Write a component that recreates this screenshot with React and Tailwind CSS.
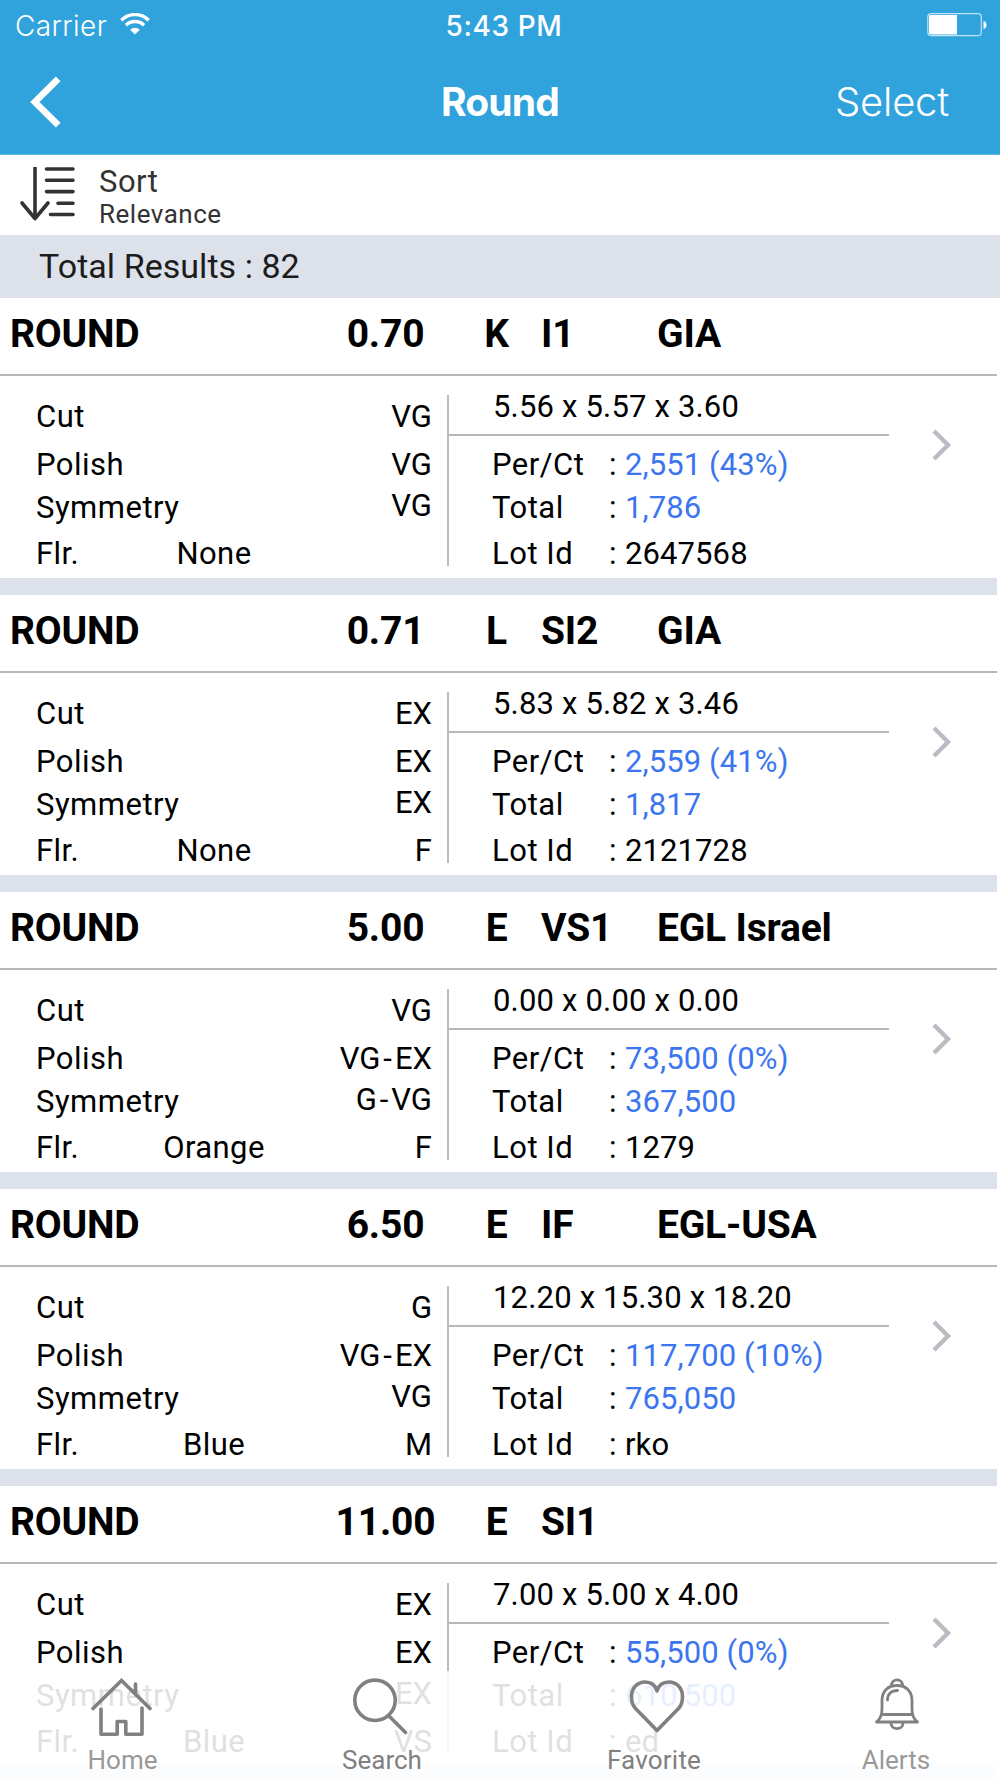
const stones = [
  {
    carat: '0.70', color: 'K', clarity: 'I1', lab: 'GIA',
    cut: 'VG', polish: 'VG', symmetry: 'VG', flr: 'None', flrGrade: '',
    size: '5.56 x 5.57 x 3.60', perCt: '2,551 (43%)', total: '1,786', lotId: '2647568',
  },
  {
    carat: '0.71', color: 'L', clarity: 'SI2', lab: 'GIA',
    cut: 'EX', polish: 'EX', symmetry: 'EX', flr: 'None', flrGrade: 'F',
    size: '5.83 x 5.82 x 3.46', perCt: '2,559 (41%)', total: '1,817', lotId: '2121728',
  },
  {
    carat: '5.00', color: 'E', clarity: 'VS1', lab: 'EGL Israel',
    cut: 'VG', polish: 'VG-EX', symmetry: 'G-VG', flr: 'Orange', flrGrade: 'F',
    size: '0.00 x 0.00 x 0.00', perCt: '73,500 (0%)', total: '367,500', lotId: '1279',
  },
  {
    carat: '6.50', color: 'E', clarity: 'IF', lab: 'EGL-USA',
    cut: 'G', polish: 'VG-EX', symmetry: 'VG', flr: 'Blue', flrGrade: 'M',
    size: '12.20 x 15.30 x 18.20', perCt: '117,700 (10%)', total: '765,050', lotId: 'rko',
  },
  {
    carat: '11.00', color: 'E', clarity: 'SI1', lab: '',
    cut: 'EX', polish: 'EX', symmetry: 'EX', flr: 'Blue', flrGrade: 'VS',
    size: '7.00 x 5.00 x 4.00', perCt: '55,500 (0%)', total: '610,500', lotId: 'ed',
  },
]

function StatusBar() {
  return (
    <div className="flex h-[50px] items-center pl-[15px] pr-[13px] text-[28px] leading-none">
      <div className="flex flex-1 items-center">
        <span className="mt-[2px] font-[350] tracking-[0.4px]">Carrier</span>
        <svg className="ml-[13px] mt-[-2px]" width="30" height="22" viewBox="0 0 30 22" fill="none" stroke="currentColor">
          <path d="M1.3 7.2a19.5 19.5 0 0 1 27.4 0" strokeWidth="3.4" />
          <path d="M6 12.2a12.8 12.8 0 0 1 18 0" strokeWidth="3.4" />
          <path d="M15 21.5l-4.8-4.8a6.8 6.8 0 0 1 9.6 0z" fill="currentColor" stroke="none" />
        </svg>
      </div>
      <span className="ml-[6px] mt-[2px] font-medium tracking-[0.6px]">5:43 PM</span>
      <div className="flex flex-1 justify-end">
        <svg width="60" height="24" viewBox="0 0 60 24" fill="none">
          <rect x="0.8" y="0.7" width="53.5" height="22" rx="3.5" stroke="#fff" strokeOpacity="0.7" strokeWidth="1.2" />
          <path d="M4 2h26v19.5H4a2 2 0 0 1-2-2V4a2 2 0 0 1 2-2z" fill="#fff" />
          <path d="M56.5 8c4 1 4 7 0 8z" fill="#fff" />
        </svg>
      </div>
    </div>
  )
}

function NavBar() {
  return (
    <div className="flex h-[104px] items-center pl-[30px] pr-[51px] pb-px">
      <div className="flex-1">
        <svg width="31" height="52" viewBox="0 0 31 52" fill="none" stroke="currentColor" strokeWidth="6.6">
          <path d="M28.2 2.8L4.9 26l23.3 23.2" />
        </svg>
      </div>
      <h1 className="mr-[-21px] text-[39px] font-bold leading-none tracking-[-0.8px]">Round</h1>
      <div className="flex flex-1 justify-end">
        <button className="text-[40px] font-[350] leading-none tracking-[-0.2px]">Select</button>
      </div>
    </div>
  )
}

function SortBar() {
  return (
    <div className="flex h-[80px] items-start pl-[19px] text-[#333]">
      <svg className="mt-[11px]" width="58" height="56" viewBox="0 0 58 56" fill="none" stroke="currentColor" strokeWidth="3.6">
        <path d="M16 1v50" />
        <path d="M3 37l13 15.5L29 37" strokeLinecap="round" strokeLinejoin="round" />
        <path d="M27.5 3H54M27.5 14.2H54M27.5 25.6H54M39 37.2H54M31.5 48.5H54" strokeLinecap="round" />
      </svg>
      <div className="ml-[22px] mt-[9px] tracking-[0.5px]">
        <div className="text-[31px] leading-[36px]">Sort</div>
        <div className="mt-[-2px] text-[26px] leading-[32px]">Relevance</div>
      </div>
    </div>
  )
}

function Grade({ value }) {
  const [from, to] = value.split('-')
  if (!to) return value
  return (
    <>
      {from}
      <span className="px-[3px]">-</span>
      {to}
    </>
  )
}

function StoneCard({ stone }) {
  return (
    <li className="mr-[3px] h-[297px] border-b-[17px] border-[#dde1eb] bg-white">
      <div className="flex h-[78px] items-start border-b-2 border-[#b7b7b7] pt-[13px] text-[39px] font-bold leading-[46px] tracking-[-0.2px]">
        <span className="w-[316px] pl-[10px]">ROUND</span>
        <span className="w-[139px] text-center">{stone.carat}</span>
        <span className="w-[83px] text-center">{stone.color}</span>
        <span className="w-[119px] pl-[3px]">{stone.clarity}</span>
        <span>{stone.lab}</span>
      </div>
      <div className="flex h-[202px] text-[31px] leading-[36px]">
        <div className="w-[447px] pl-[36px] pr-[15px] pt-[23px]">
          <div className="flex h-[48px] justify-between">
            <span className="tracking-[0.5px]">Cut</span>
            <span>{stone.cut}</span>
          </div>
          <div className="flex h-[43px] justify-between">
            <span className="tracking-[0.5px]">Polish</span>
            <span><Grade value={stone.polish} /></span>
          </div>
          <div className="flex h-[46px] justify-between">
            <span className="tracking-[0.5px]">Symmetry</span>
            <span className="mt-[-2px]"><Grade value={stone.symmetry} /></span>
          </div>
          <div className="flex">
            <span className="w-[98px] tracking-[0.4px]">Flr.</span>
            <span className="w-[160px] text-center tracking-[0.4px]">{stone.flr}</span>
            <span className="flex-1 text-right">{stone.flrGrade}</span>
          </div>
        </div>
        <div className="mt-[19px] h-[171px] w-[2px] bg-[#bdbdbd]" />
        <div className="w-[440px] pt-[13px]">
          <div className="h-[47px] border-b-2 border-[#b7b7b7] pl-[44px] tracking-[0.18px]">{stone.size}</div>
          <dl className="grid grid-cols-[116px_17px_1fr] grid-rows-[43px_46px_36px] pl-[43px] pt-[11px]">
            <dt className="tracking-[0.5px]">Per/Ct</dt>
            <dd className="pl-px">:</dd>
            <dd className="tracking-[0.1px] text-[#3b75f0]">{stone.perCt}</dd>
            <dt className="tracking-[0.5px]">Total</dt>
            <dd className="pl-px">:</dd>
            <dd className="tracking-[0.1px] text-[#3b75f0]">{stone.total}</dd>
            <dt className="tracking-[0.5px]">Lot Id</dt>
            <dd className="pl-px">:</dd>
            <dd className="tracking-[0.1px]">{stone.lotId}</dd>
          </dl>
        </div>
        <svg className="ml-[43px] mt-[53px]" width="20" height="32" viewBox="0 0 20 32" fill="none" stroke="#bbbbc3" strokeWidth="4.4">
          <path d="M2 2l14 14L2 30" />
        </svg>
      </div>
    </li>
  )
}

function TabBar() {
  return (
    <nav className="absolute inset-x-0 bottom-0 flex h-[107px] bg-white/88 pt-[7px] text-[26px] leading-[30px] text-[#808080]">
      <div className="flex w-[245px] flex-col items-center">
        <svg className="mr-[4px]" width="62" height="60" viewBox="0 0 62 60" fill="none" stroke="currentColor" strokeWidth="3.6" strokeLinecap="round">
          <path d="M3 30.5L31.5 2.5 60 30.5M45.5 6v9" />
          <path d="M11 31v25.2h16.2V43.5h8.6v12.7H52V30" strokeLinejoin="round" />
        </svg>
        <span className="mt-[7px] text-[#999]">Home</span>
      </div>
      <div className="flex w-[274px] flex-col items-center">
        <svg className="mr-[4px]" width="56" height="60" viewBox="0 0 56 60" fill="none" stroke="currentColor" strokeWidth="3.6" strokeLinecap="round">
          <circle cx="23" cy="22.3" r="20.2" />
          <path d="M37.5 38.5l16 16" />
        </svg>
        <span className="mt-[7px]">Search</span>
      </div>
      <div className="flex w-[270px] flex-col items-center">
        <svg className="ml-[5px]" width="56" height="60" viewBox="0 0 56 60" fill="none" stroke="currentColor" strokeWidth="3.6" strokeLinejoin="round">
          <path d="M28 52.5L6.500 30.500C2.500 26.500 2.500 21 2.500 18.500 2.500 10 8.500 4 16 4c6 0 10.500 3.500 12 9C29.500 7.500 34 4 40 4c7.500 0 13.500 6 13.500 14.500 0 2.500 0 8-4 12z" />
        </svg>
        <span className="mt-[7px] tracking-[0.2px]">Favorite</span>
      </div>
      <div className="flex w-[211px] flex-col items-center pl-[3px]">
        <svg className="ml-[1px]" width="46" height="60" viewBox="0 0 46 60" fill="none" stroke="currentColor" strokeWidth="2.8" strokeLinejoin="round" strokeLinecap="round">
          <path d="M17.5 7.5c0-7.5 11-7.5 11 0" />
          <path d="M2.5 44h41c-3.500-2.500-5.500-7-5.500-13V23C38 12.500 31.500 7.500 23 7.500S8 12.500 8 23v8c0 6-2 10.500-5.500 13zM8 36.500h30" />
          <path d="M13.500 22c0-6 4-9.500 10-9.500M17 45c0 7.500 12 7.500 12 0" />
        </svg>
        <span className="mt-[7px] text-[#999]">Alerts</span>
      </div>
    </nav>
  )
}

export default function App() {
  return (
    <div className="relative h-[1778px] w-[1000px] overflow-hidden bg-white font-['Roboto',sans-serif] text-black">
      <header className="h-[155px] border-b border-[#5fb8e6] bg-[#30a3dd] font-['Inter',sans-serif] text-white">
        <StatusBar />
        <NavBar />
      </header>
      <SortBar />
      <div className="h-[63px] bg-[#dde1ea] pl-[39px] pt-[11px] text-[34px] leading-[40px] tracking-[0.05px] text-[#1c1c1c]">
        Total Results : 82
      </div>
      <ul>
        {stones.map((stone, i) => (
          <StoneCard key={i} stone={stone} />
        ))}
      </ul>
      <TabBar />
    </div>
  )
}
